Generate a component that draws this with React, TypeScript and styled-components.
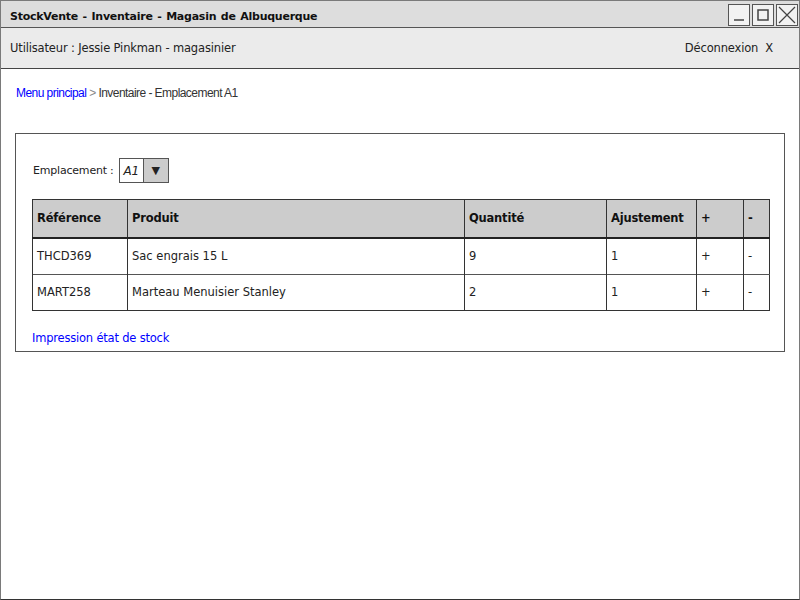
import React from 'react';
import styled, { createGlobalStyle } from 'styled-components';

const sketchFont = `"Comic Sans MS", "DejaVu Sans", sans-serif`;

const GlobalStyle = createGlobalStyle`
  html, body {
    margin: 0;
    padding: 0;
    background: #ffffff;
  }
  body {
    font-family: ${sketchFont};
    color: #222;
  }
`;

const Window = styled('div')`
  width: 800px;
  height: 600px;
  box-sizing: border-box;
  border: 1px solid #7a7a7a;
  border-bottom-color: #333;
  display: flex;
  flex-direction: column;
  overflow: hidden;
`;

const TitleBar = styled('div')`
  height: 26px;
  background: #dddddd;
  border-bottom: 1px solid #555;
  display: flex;
  align-items: center;
  justify-content: space-between;
  padding: 0 1px 0 9px;
`;

const Title = styled('div')`
  font-size: 11px;
  font-weight: bold;
  letter-spacing: -0.25px;
  word-spacing: 1px;
  color: #111;
  padding-top: 4px;
`;

const WindowButtons = styled('div')`
  display: flex;
  gap: 2px;
  padding-top: 1px;
`;

const WinButton = styled('div')`
  width: 20px;
  height: 20px;
  border: 1.5px solid #555;
  background: #f2f2f2;
  display: flex;
  align-items: center;
  justify-content: center;
`;

const UserBar = styled('div')`
  height: 40px;
  background: #ebebeb;
  border-bottom: 1px solid #444;
  display: flex;
  align-items: center;
  justify-content: space-between;
  padding: 0 26px 0 9px;
  font-size: 11.5px;
  letter-spacing: -0.15px;
  color: #222;
`;

const Breadcrumb = styled('div')`
  font-family: "Liberation Sans", Arial, sans-serif;
  font-size: 12px;
  letter-spacing: -0.55px;
  color: #333;
  padding: 17px 15px 0;
  height: 29px;
`;

const CrumbLink = styled('span')`
  color: #0000ff;
`;

const CrumbSep = styled('span')`
  color: #888;
`;

const Panel = styled('div')`
  margin: 18px 14px 0 14px;
  border: 1px solid #555;
  padding: 24px 14px 6px 16px;
  display: flex;
  flex-direction: column;
`;

const FieldRow = styled('div')`
  display: flex;
  align-items: center;
  gap: 5px;
  font-size: 11px;
  letter-spacing: -0.2px;
  margin-left: 1px;
`;

const Select = styled('div')`
  display: flex;
  height: 23px;
  border: 1px solid #555;
`;

const SelectValue = styled('div')`
  width: 23px;
  display: flex;
  align-items: center;
  justify-content: center;
  background: #fff;
  border-right: 1px solid #555;
  font-size: 12px;
  font-style: italic;
`;

const SelectArrow = styled('div')`
  width: 24px;
  display: flex;
  align-items: center;
  justify-content: center;
  background: #cccccc;
  font-size: 11px;
`;

const Table = styled('table')`
  margin-top: 16px;
  width: 737px;
  border-collapse: collapse;
  border: 1px solid #333;
  font-size: 11.5px;
  table-layout: fixed;
`;

const HeadCell = styled('th')<{ $w: number }>`
  box-sizing: border-box;
  width: ${(p) => p.$w}px;
  height: 38px;
  background: #cccccc;
  border-left: 1px solid #333;
  border-bottom: 2px solid #222;
  text-align: left;
  padding: 0 4px;
  font-weight: bold;
  letter-spacing: -0.2px;
  color: #111;
`;

const Cell = styled('td')`
  box-sizing: border-box;
  height: 36.5px;
  border-left: 1px solid #333;
  border-top: 1px solid #555;
  padding: 0 4px;
  color: #222;
`;

const PrintLink = styled('div')`
  color: #0000ff;
  font-size: 11.5px;
  letter-spacing: -0.2px;
  margin-top: 20px;
`;

const columns: { label: string; w: number }[] = [
  { label: 'Référence', w: 95 },
  { label: 'Produit', w: 337 },
  { label: 'Quantité', w: 142 },
  { label: 'Ajustement', w: 90 },
  { label: '+', w: 47 },
  { label: '-', w: 26 },
];

const rows = [
  ['THCD369', 'Sac engrais 15 L', '9', '1', '+', '-'],
  ['MART258', 'Marteau Menuisier Stanley', '2', '1', '+', '-'],
];

const App = () => {
  return (
    <>
      <GlobalStyle />
      <Window>
        <TitleBar>
          <Title>StockVente - Inventaire - Magasin de Albuquerque</Title>
          <WindowButtons>
            <WinButton>
              <svg width="14" height="14" viewBox="0 0 14 14">
                <line x1="2" y1="12" x2="12" y2="12" stroke="#444" strokeWidth="1.5" />
              </svg>
            </WinButton>
            <WinButton>
              <svg width="14" height="14" viewBox="0 0 14 14">
                <rect x="2" y="2" width="10" height="10" fill="none" stroke="#444" strokeWidth="1.5" />
              </svg>
            </WinButton>
            <WinButton>
              <svg width="18" height="18" viewBox="0 0 18 18">
                <path d="M1 1 L17 17 M17 1 L1 17" stroke="#444" strokeWidth="1.2" />
              </svg>
            </WinButton>
          </WindowButtons>
        </TitleBar>
        <UserBar>
          <span>Utilisateur : Jessie Pinkman - magasinier</span>
          <span>Déconnexion&nbsp;&nbsp;X</span>
        </UserBar>
        <Breadcrumb>
          <CrumbLink>Menu principal</CrumbLink> <CrumbSep>&gt;</CrumbSep> Inventaire - Emplacement A1
        </Breadcrumb>
        <Panel>
          <FieldRow>
            <span>Emplacement :</span>
            <Select>
              <SelectValue>A1</SelectValue>
              <SelectArrow>▼</SelectArrow>
            </Select>
          </FieldRow>
          <Table>
            <thead>
              <tr>
                {columns.map((c) => (
                  <HeadCell key={c.label} $w={c.w}>
                    {c.label}
                  </HeadCell>
                ))}
              </tr>
            </thead>
            <tbody>
              {rows.map((r) => (
                <tr key={r[0]}>
                  {r.map((v, i) => (
                    <Cell key={i}>{v}</Cell>
                  ))}
                </tr>
              ))}
            </tbody>
          </Table>
          <PrintLink>Impression état de stock</PrintLink>
        </Panel>
      </Window>
    </>
  );
};

export default App;
